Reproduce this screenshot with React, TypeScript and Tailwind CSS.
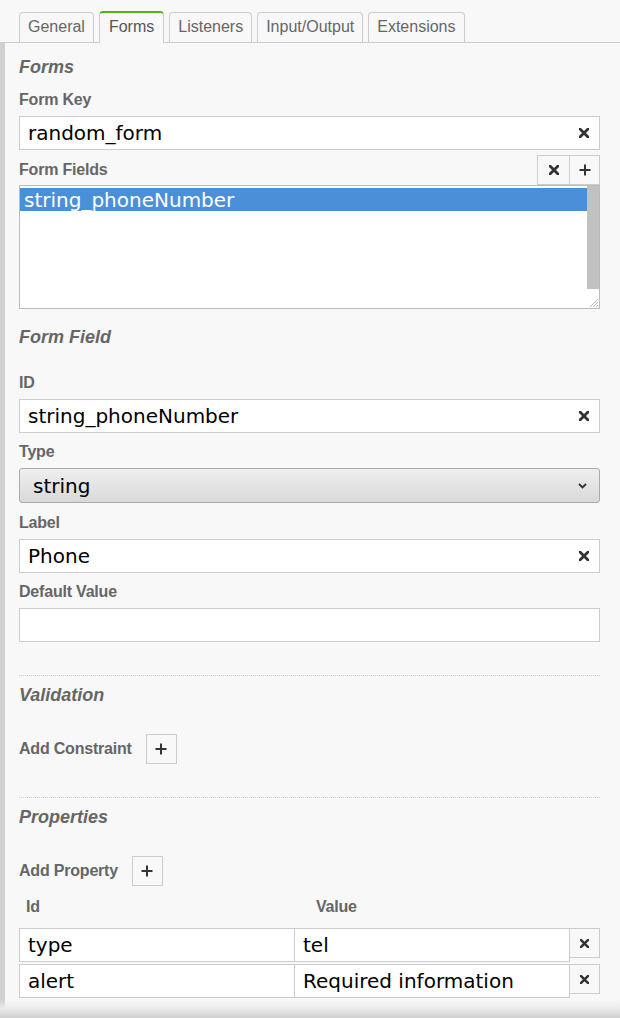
import React from "react"

const label = "font-['Liberation_Sans',Arial,sans-serif] font-bold text-[16px] leading-[18px] tracking-[-0.2px] text-[#666]"
const heading = "font-['Liberation_Sans',Arial,sans-serif] font-bold italic text-[18px] leading-[21px] text-[#666]"
const inputText = "font-['DejaVu_Sans',sans-serif] text-[20px] text-black"

const tabs = ["General", "Forms", "Listeners", "Input/Output", "Extensions"]

const ClearIcon = ({ size = 10 }: { size?: number }) => (
  <svg width={size} height={size} viewBox="0 0 10 10">
    <path d="M1 1 L9 9 M9 1 L1 9" stroke="#333" strokeWidth="2.8" strokeLinecap="square" />
  </svg>
)

const PlusIcon = () => (
  <svg width="12" height="12" viewBox="0 0 12 12">
    <path d="M6 0.5 V11.5 M0.5 6 H11.5" stroke="#333" strokeWidth="2" />
  </svg>
)

const TextInput = ({ value, clear = true }: { value?: string; clear?: boolean }) => (
  <div className="h-[34px] border border-[#ccc] bg-white flex items-center pl-[8px] pr-[10px]">
    <span className={`${inputText} flex-1`}>{value}</span>
    {clear && value && <ClearIcon />}
  </div>
)

const IconButton = ({ children, className = "" }: { children: React.ReactNode; className?: string }) => (
  <button className={`w-[31px] h-[30px] border border-[#ccc] bg-[#f8f8f8] flex items-center justify-center ${className}`}>
    {children}
  </button>
)

const Separator = () => <div className="border-t border-dotted border-[#ccc]" />

export default function App() {
  return (
    <div className="w-[620px] h-[1018px] bg-[#f8f8f8] relative overflow-hidden">
      {/* Tabs */}
      <div className="h-[43px] flex items-end gap-[5px] pl-[19px] border-b border-[#ccc]">
        {tabs.map((t) =>
          t === "Forms" ? (
            <div
              key={t}
              className="h-[32px] -mb-px relative z-10 bg-[#f8f8f8] border border-b-0 border-[#ccc] border-t-2 border-t-[#52b415] rounded-t-[4px] px-[9px] pb-[3px] flex items-center font-['Liberation_Sans',Arial,sans-serif] text-[16px] text-[#555]"
            >
              {t}
            </div>
          ) : (
            <div
              key={t}
              className="h-[30px] border border-b-0 border-[#ccc] rounded-t-[4px] px-[8px] pb-[2px] flex items-center font-['Liberation_Sans',Arial,sans-serif] text-[16px] text-[#666]"
            >
              {t}
            </div>
          )
        )}
      </div>

      <div className="flex h-full">
        <div className="w-[5px] bg-[#d0d0d0]" />
        <div className="flex-1 pl-[14px] pr-[20px] flex flex-col">
          {/* Forms */}
          <div className={`${heading} mt-[14px]`}>Forms</div>
          <div className={`${label} mt-[13px]`}>Form Key</div>
          <div className="mt-[7px]">
            <TextInput value="random_form" />
          </div>
          <div className="mt-[5px] flex items-center justify-between h-[30px]">
            <div className={label}>Form Fields</div>
            <div className="flex">
              <IconButton className="w-[32px] border-r-0">
                <ClearIcon />
              </IconButton>
              <IconButton>
                <PlusIcon />
              </IconButton>
            </div>
          </div>
          <div className="h-[124px] border border-[#bbb] bg-white flex">
            <div className="flex-1 pt-[2px]">
              <div className="h-[23px] bg-[#4a90d9] pl-[4px] flex items-center font-['DejaVu_Sans',sans-serif] text-[20px] text-white">
                string_phoneNumber
              </div>
            </div>
            <div className="w-[12px] flex flex-col">
              <div className="h-[103px] bg-[#c1c1c1]" />
              <div className="flex-1 flex items-end justify-end">
                <svg width="12" height="12" viewBox="0 0 12 12">
                  <path d="M11 3 L3 11 M11 6 L6 11 M11 9 L9 11" stroke="#bbb" strokeWidth="1" />
                </svg>
              </div>
            </div>
          </div>

          {/* Form Field */}
          <div className={`${heading} mt-[18px]`}>Form Field</div>
          <div className={`${label} mt-[26px]`}>ID</div>
          <div className="mt-[7px]">
            <TextInput value="string_phoneNumber" />
          </div>
          <div className={`${label} mt-[10px]`}>Type</div>
          <div className="mt-[7px] h-[35px] border border-[#aaa] rounded-[3px] bg-gradient-to-b from-[#efefef] to-[#d9d9d9] flex items-center pl-[13px] pr-[12px]">
            <span className={`${inputText} flex-1 text-[#222]`}>string</span>
            <svg width="9" height="6" viewBox="0 0 9 6">
              <path d="M1 1 L4.5 4.5 L8 1" stroke="#333" strokeWidth="1.8" fill="none" />
            </svg>
          </div>
          <div className={`${label} mt-[11px]`}>Label</div>
          <div className="mt-[7px]">
            <TextInput value="Phone" />
          </div>
          <div className={`${label} mt-[10px]`}>Default Value</div>
          <div className="mt-[7px]">
            <TextInput clear={false} />
          </div>

          {/* Validation */}
          <div className="mt-[33px]">
            <Separator />
          </div>
          <div className={`${heading} mt-[9px]`}>Validation</div>
          <div className="mt-[28px] flex items-center gap-[14px]">
            <div className={label}>Add Constraint</div>
            <IconButton>
              <PlusIcon />
            </IconButton>
          </div>

          {/* Properties */}
          <div className="mt-[33px]">
            <Separator />
          </div>
          <div className={`${heading} mt-[9px]`}>Properties</div>
          <div className="mt-[28px] flex items-center gap-[14px]">
            <div className={label}>Add Property</div>
            <IconButton>
              <PlusIcon />
            </IconButton>
          </div>
          <div className="mt-[12px] flex">
            <div className={`${label} w-[297px] pl-[7px]`}>Id</div>
            <div className={label}>Value</div>
          </div>
          <div className="mt-[12px] flex flex-col gap-[2px]">
            {[
              ["type", "tel"],
              ["alert", "Required information"],
            ].map(([id, val]) => (
              <div key={id} className="flex items-start">
                <div className="w-[276px] h-[34px] border border-[#ccc] bg-white flex items-center pl-[8px]">
                  <span className={inputText}>{id}</span>
                </div>
                <div className="w-[275px] h-[34px] border border-l-0 border-[#ccc] bg-white flex items-center pl-[8px]">
                  <span className={inputText}>{val}</span>
                </div>
                <button className="w-[31px] h-[30px] -ml-px border border-[#ccc] bg-[#f8f8f8] flex items-center justify-center">
                  <ClearIcon size={9} />
                </button>
              </div>
            ))}
          </div>
        </div>
      </div>

      {/* bottom shadow */}
      <div className="absolute left-0 right-0 bottom-0 h-[19px] bg-gradient-to-b from-[#f8f8f8]/0 via-[#ececec] to-[#cfcfcf]" />
    </div>
  )
}
